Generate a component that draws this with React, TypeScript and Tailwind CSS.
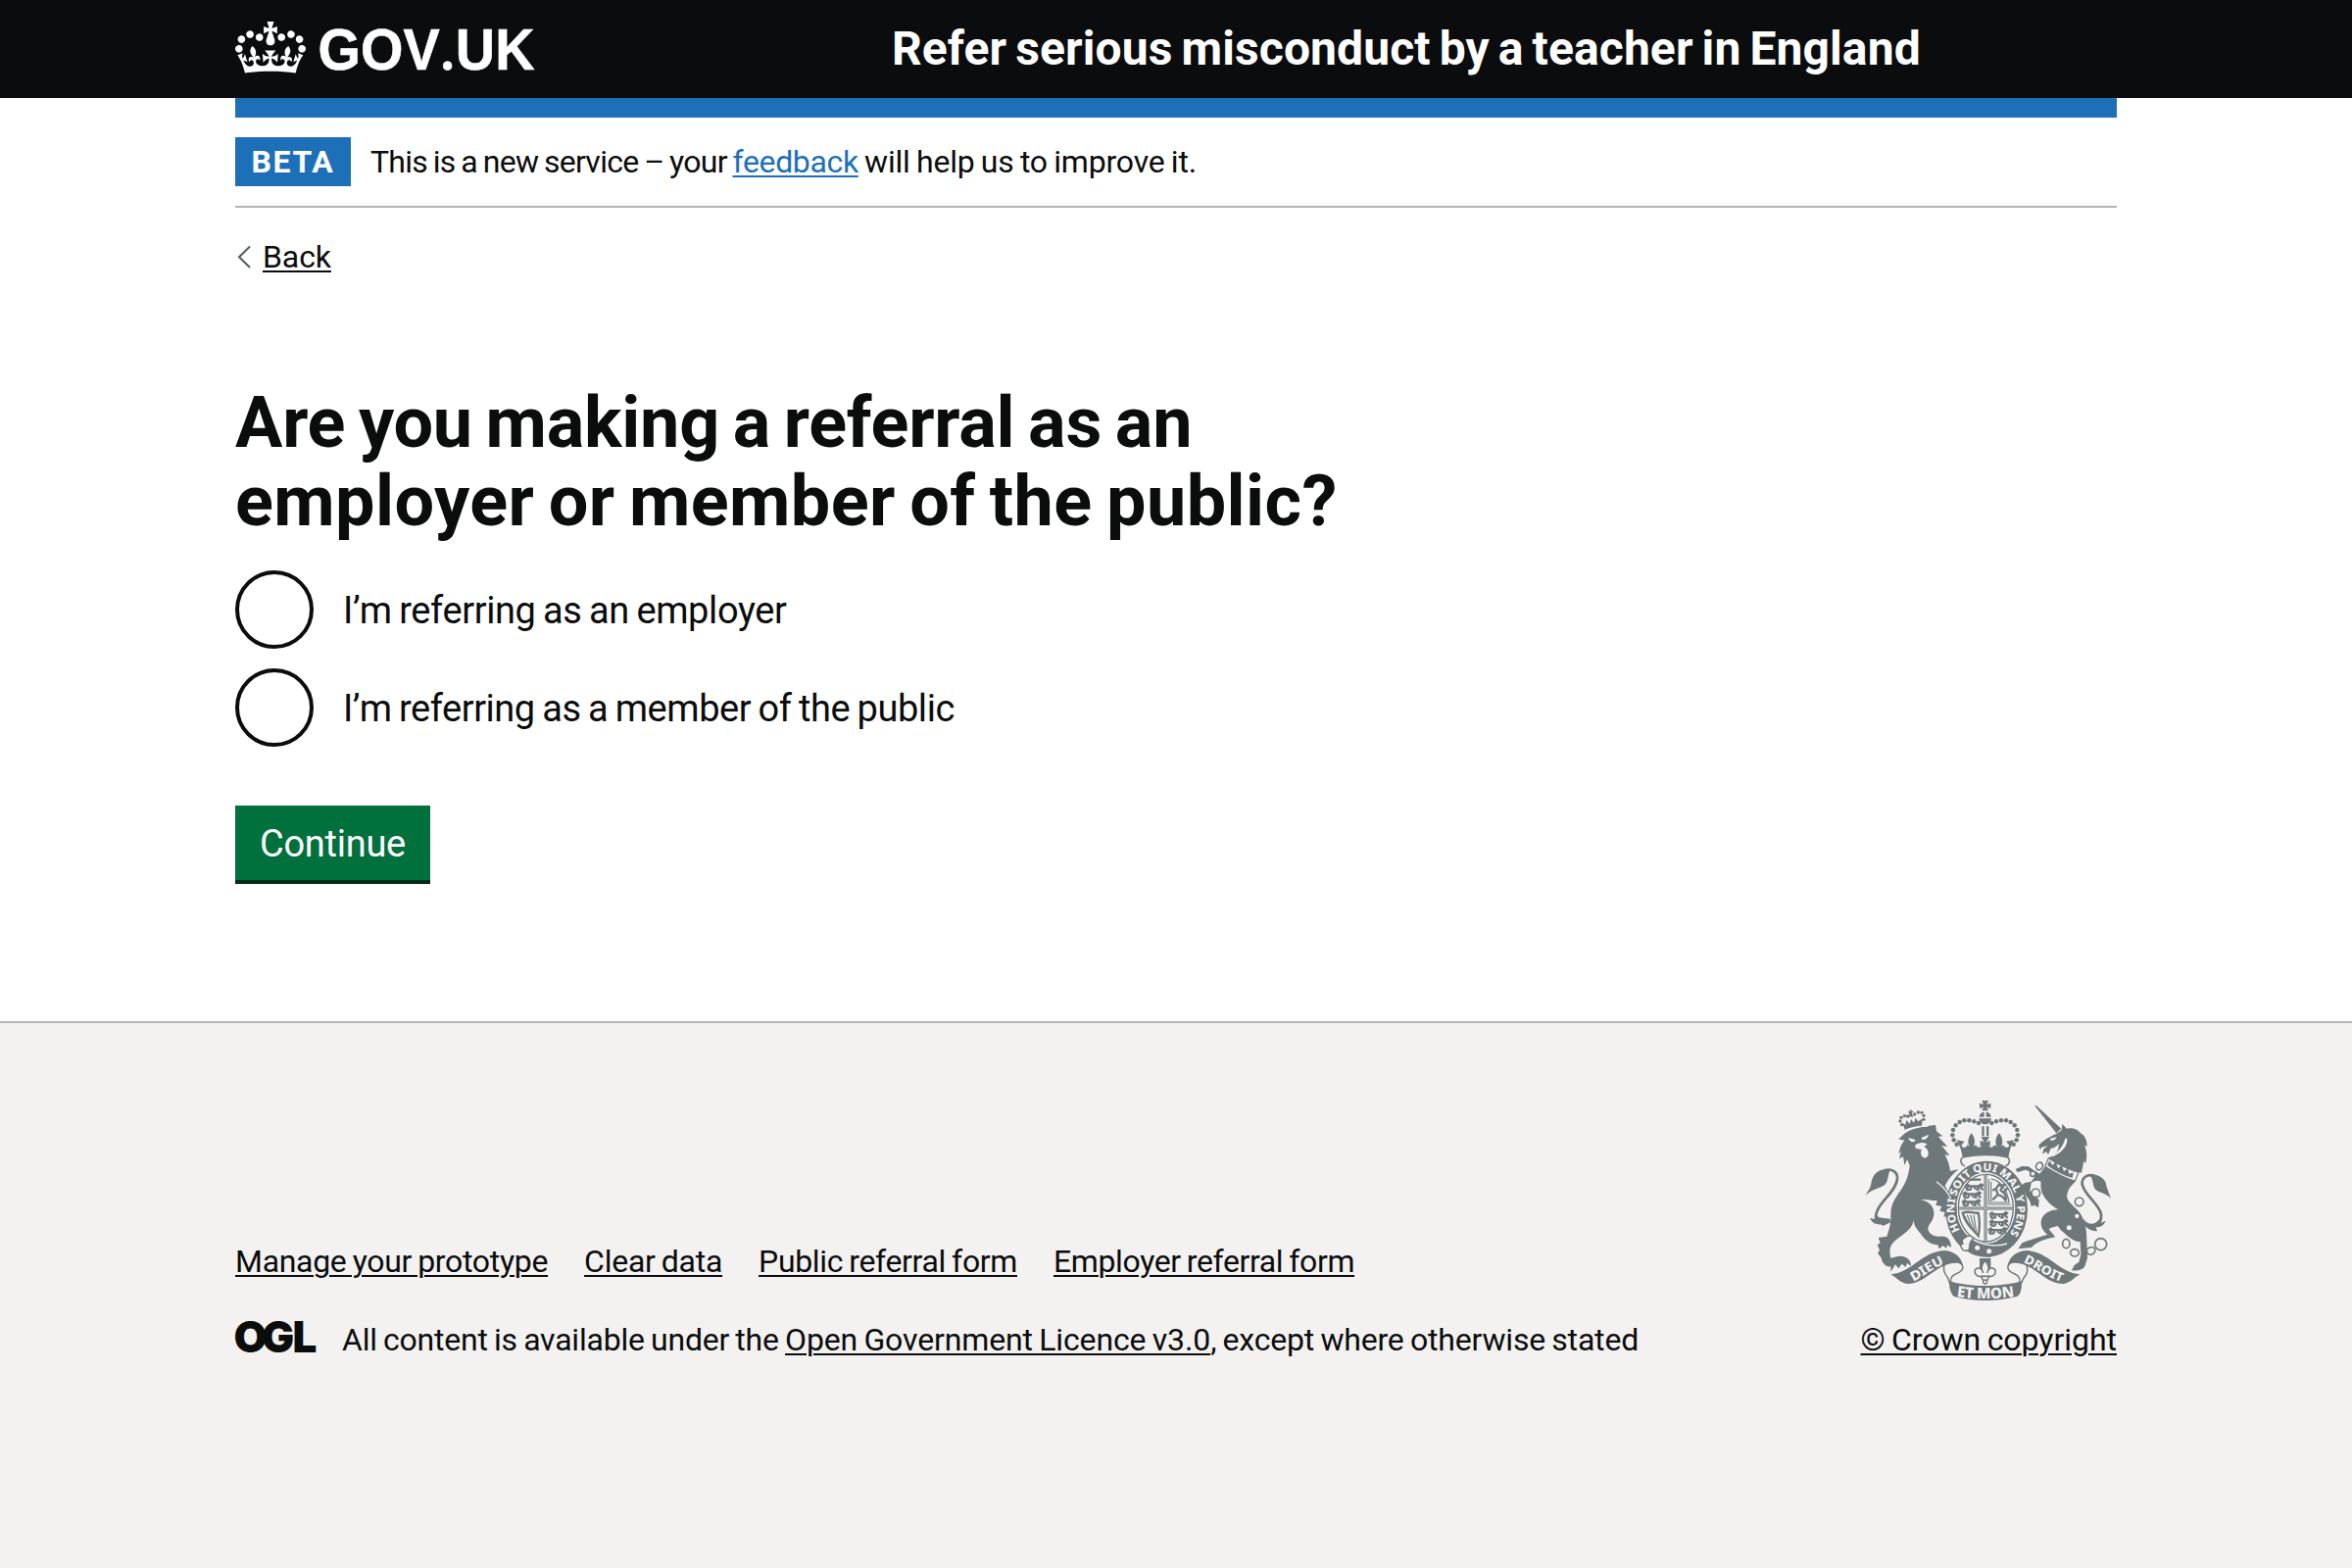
import React from "react";

const LINK = "underline decoration-2 underline-offset-[3px]";

function Crown() {
  return (
    <svg viewBox="0 0 132 97" className="relative -top-[2px] h-[53px] w-[72px] shrink-0" fill="currentColor" aria-hidden="true">
      <path
        fillRule="evenodd"
        d="M25 30.2c3.5 1.5 7.7-.2 9.1-3.7 1.5-3.6-.2-7.8-3.9-9.2-3.6-1.4-7.6.3-9.1 3.9-1.4 3.5.3 7.5 3.9 9zM9 39.5c3.6 1.5 7.8-.2 9.2-3.7 1.5-3.6-.2-7.8-3.9-9.1-3.6-1.5-7.6.2-9.1 3.8-1.4 3.5.3 7.5 3.8 9zM4.4 57.2c3.5 1.5 7.7-.2 9.1-3.8 1.5-3.6-.2-7.7-3.9-9.1-3.5-1.5-7.6.3-9.1 3.8-1.4 3.5.3 7.6 3.9 9.1zm38.3-21.4c3.5 1.5 7.7-.2 9.1-3.8 1.5-3.6-.2-7.7-3.9-9.1-3.6-1.5-7.6.3-9.1 3.8-1.3 3.6.4 7.7 3.9 9.1zm64.4-5.6c-3.6 1.5-7.8-.2-9.1-3.7-1.5-3.6.2-7.8 3.8-9.2 3.6-1.4 7.7.3 9.2 3.9 1.3 3.5-.4 7.5-3.9 9zm15.9 9.3c-3.6 1.5-7.7-.2-9.1-3.7-1.5-3.6.2-7.8 3.7-9.1 3.6-1.5 7.7.2 9.2 3.8 1.5 3.5-.3 7.5-3.8 9zm4.7 17.7c-3.6 1.5-7.8-.2-9.2-3.8-1.5-3.6.2-7.7 3.9-9.1 3.6-1.5 7.7.3 9.2 3.8 1.3 3.5-.4 7.6-3.9 9.1zM89.3 35.8c-3.6 1.5-7.8-.2-9.2-3.8-1.4-3.6.2-7.7 3.9-9.1 3.6-1.5 7.7.3 9.2 3.8 1.4 3.6-.3 7.7-3.9 9.1zM69.7 17.7l8.9 4.7V9.3l-8.9 2.8c-.2-.3-.5-.6-.9-.9L72.4 0H59.6l3.5 11.2c-.3.3-.6.5-.9.9l-8.8-2.8v13.1l8.8-4.7c.3.3.6.7.9.9l-5 15.4v.1c-.2.8-.4 1.6-.4 2.4 0 4.1 3.1 7.5 7 8.1h.2c.3 0 .7.1 1 .1.4 0 .7 0 1-.1h.2c4-.6 7.1-4.1 7.1-8.1 0-.8-.1-1.7-.4-2.4V34l-5.1-15.4c.4-.2.7-.6 1-.9zM66 92.8c16.9 0 32.8 1.1 47.1 3.2 4-16.9 8.9-26.7 14-33.5l-9.6-3.4c1 4.9 1.1 7.2 0 10.2-1.5-1.4-3-4.3-4.2-8.7L108.6 76c2.8-2 5-3.2 7.5-3.3-4.4 9.4-10 11.9-13.6 11.2-4.3-.8-6.3-4.6-5.6-7.9 1-4.7 5.7-5.9 8-.5 4.3-8.7-3-11.4-7.6-8.8 7.1-7.2 7.9-13.5 2.1-21.1-8 6.1-8.1 12.3-4.5 20.8-4.7-5.4-12.1-2.5-9.5 6.2 3.4-5.2 7.9-2 7.2 3.1-.6 4.3-6.4 7.8-13.5 7.2-10.3-.9-10.9-8-11.2-13.8 2.5-.5 7.1 1.8 11 7.3L80.2 60c-4.1 4.4-8 5.3-12.3 5.4 1.4-4.4 8-11.6 8-11.6H55.5s6.4 7.2 7.9 11.6c-4.2-.1-8-1-12.3-5.4l1.4 16.4c3.9-5.5 8.5-7.7 10.9-7.3-.3 5.8-.9 12.8-11.1 13.8-7.2.6-12.9-2.9-13.5-7.2-.7-5 3.8-8.3 7.1-3.1 2.7-8.7-4.6-11.6-9.4-6.2 3.7-8.5 3.6-14.7-4.6-20.8-5.8 7.6-5 13.9 2.2 21.1-4.7-2.6-11.9.1-7.7 8.8 2.3-5.5 7.1-4.2 8.1.5.7 3.3-1.3 7.1-5.7 7.9-3.5.7-9-1.8-13.5-11.2 2.5.1 4.7 1.3 7.5 3.3l-4.7-15.4c-1.2 4.4-2.7 7.2-4.3 8.7-1.1-3-.9-5.3 0-10.2l-9.5 3.4c5 6.9 9.9 16.7 14 33.5 14.8-2.1 30.8-3.2 47.7-3.2z"
      />
    </svg>
  );
}

const INK = "#6e777a";
const PAPER = "#f3f2f1";

const pearls: [number, number][] = [
  [320, 176], [311, 163], [307, 148], [309, 132], [317, 118], [329, 108], [343, 103], [358, 103], [373, 106], [387, 111],
];

const lionCrownPearls: [number, number][] = [
  [152, 116], [147, 105], [150, 94], [160, 89], [170, 90], [191, 84], [202, 78], [213, 79], [219, 88], [219, 100],
];

function Passant({ x, y }: { x: number; y: number }) {
  return (
    <g transform={`translate(${x} ${y})`} fill="none" stroke={INK} strokeWidth="6.5" strokeLinecap="round" strokeLinejoin="round">
      <path d="M4 8l6-5 6 5h28l8-6 5 3-5 4M14 9l-8 6 4 5M22 10l-3 9h-6M40 10l4 8h-7M48 10l8 8M30 8l2 6" />
    </g>
  );
}

function RoyalArms() {
  return (
    <svg viewBox="42 42 750 612" className="h-[204px] w-[250px]" aria-hidden="true">
      {/* Imperial crown */}
      <g fill={INK}>
        <path d="M397 42h20l-5 12 12-4v16l-12-4 5 11h-20l5-11-12 4V50l12 4zM389 92c1-9 6-14 15-15v15zM410 77c9 1 14 6 15 15h-15zM388 97h38c-2 12-10 18-19 18s-17-6-19-18z" />
        {pearls.map(([x, y]) => (
          <g key={`${x}-${y}`}>
            <circle cx={x} cy={y} r="6.8" />
            <circle cx={814 - x} cy={y} r="6.8" />
          </g>
        ))}
        <path d="M397 121h7v30h-7zM411 121h7v30h-7z" />
        <path d="M320 163L344 167L334 179C338 188 350 188 352 178L358 182C352 168 356 152 365 142C374 152 378 168 372 182L379 178C382 188 394 188 399 178L392 184V164L404 170L395 153H420L410 170L422 164V184L415 178C420 188 432 188 435 178L442 182C436 168 440 152 450 142C459 152 463 168 457 182L463 178C466 188 478 188 481 179L471 167L495 163C486 180 480 200 478 218Q407 202 338 218C336 200 330 180 320 163Z" />
      </g>
      <path d="M345 242c-14-4-17-22-4-27 44-9 88-9 132 0 13 5 10 23-4 27" fill={PAPER} stroke={INK} strokeWidth="4.5" />

      {/* Garter */}
      <ellipse cx="411" cy="374" rx="126" ry="147" fill={INK} />
      <ellipse cx="409" cy="371" rx="90" ry="109" fill={PAPER} />

      {/* Quartered shield */}
      <g fill="none" stroke={INK}>
        <ellipse cx="409" cy="371" rx="84" ry="103" strokeWidth="4" />
        <path d="M408 268v208M325 372h168" strokeWidth="9" />
        <path d="M408 268v208M325 372h168" stroke={PAPER} strokeWidth="2" />
        <path d="M418 282v78h68M425 290v64h56M425 282c30 4 50 34 55 72" strokeWidth="3.5" />
        <path d="M432 344l14-14 14 6 10 12M446 330l-6-18 10-14 10 10-6 8 14 12 4 14M440 312l-8 4M458 302l10-2M464 322l10-10" strokeWidth="7" strokeLinecap="round" strokeLinejoin="round" />
        <path d="M338 386c20-8 32 2 48 0 6 26 4 48 0 70-14-18-38-32-48-70z" strokeWidth="7" />
        <path d="M352 392l14 40M362 392l12 48M372 392l8 54M345 396l10 24" strokeWidth="3.5" />
      </g>
      <Passant x={343} y={296} />
      <Passant x={336} y={320} />
      <Passant x={334} y={344} />
      <Passant x={418} y={382} />
      <Passant x={418} y={406} />
      <Passant x={414} y={430} />
      <path d="M356 284h38" stroke={INK} strokeWidth="7" />

      {/* Strap and buckle */}
      <path d="M364 462c42 24 84 24 122 6l-18 30-48 24-58-20z" fill={INK} />
      <path d="M368 466c34 20 72 24 106 14" fill="none" stroke={PAPER} strokeWidth="4" />
      <circle cx="383" cy="493" r="7.5" fill={PAPER} />
      <circle cx="419" cy="503" r="7.5" fill={PAPER} />
      <path d="M345 462c10-10 22-4 28 2-10 4-14 12-14 30-4 12-22 10-24-2-6-6-2-12 4-12-6-8 0-16 6-18z" fill={PAPER} stroke={INK} strokeWidth="4.5" />

      {/* Lion */}
      <g fill={INK}>
        {lionCrownPearls.map(([x, y]) => (
          <circle key={`${x}-${y}`} cx={x} cy={y} r="5" />
        ))}
        <path d="M171 74l6 2-1-5 6-1-1 5 7-1-5 7 4 12-10-2-4 4 2-12zM154 110l9 6 3-14 10 11 4-14 9 11 5-15 8 11 13-9-2 25c-18 0-36 4-51 12z" />
        <path d="M142 160L160 143C184 126 220 120 255 117L258 136L277 151L263 152L292 183L274 180L298 210L284 208C292 224 298 240 300 258L326 252C306 268 292 284 284 304L306 340C320 358 322 372 318 394L309 390L305 400L297 394L280 398L284 384L268 380L274 366L256 362L260 348C244 350 226 342 210 346C240 352 252 370 250 392C248 412 232 420 232 436C236 452 252 460 270 458C290 456 302 466 303 492L292 484L288 494L278 486L266 496L262 484C238 484 222 468 208 448C196 432 188 424 189 408C180 444 150 452 128 474C112 490 114 506 118 524L136 520C158 514 180 526 180 548L168 540L164 552L152 542L142 556L132 544L118 566L118 550C100 552 92 538 88 522L78 510L84 500L77 484L86 478L80 462L106 458C114 434 118 420 118 396C116 356 136 336 154 308C168 288 174 262 176 240L168 222L160 240L156 214L144 220L150 196L142 206C144 190 152 172 160 164Z" />
        <path d="M98 253C78 256 62 268 58 296C56 312 46 318 42 332C56 314 84 312 100 300C112 288 108 270 116 256Z" />
        <path d="M98 256c24-8 42 6 40 26-4 44-68 76-66 120 0 18 16 20 44 8" fill="none" stroke={INK} strokeWidth="8" />
        <path d="M70 386l2 20-18-4c8 16 18 20 34 18l6 6 20-10 2-12-34-4z" />
      </g>
      <g fill={PAPER}>
        <path d="M160 132C188 120 216 118 232 118L232 122C206 122 184 127 162 136ZM172 156L194 162L190 168C182 170 174 166 172 156ZM212 156L234 146C232 156 224 162 214 162ZM192 180C204 168 220 170 230 176L220 182L230 192C236 204 234 216 222 218C210 214 208 204 212 192L194 188Z" />
      </g>
      <path d="M258 290c16 12 34 30 44 52" fill="none" stroke={PAPER} strokeWidth="4" />

      {/* Garter motto */}
      <path id="garter-line" d="M330 440A96 117 0 1 1 476 458" fill="none" />
      <text fill={PAPER} fontFamily="'Noto Sans', sans-serif" fontWeight="800" fontSize="33">
        <textPath href="#garter-line" textLength="505" lengthAdjust="spacingAndGlyphs">
          HONI SOIT QUI MAL Y PENSE
        </textPath>
      </text>

      {/* Unicorn */}
      <g fill={INK}>
        <path d="M558 57l6 1 76 70-15 14z" />
        <path d="M571 180c10-14 28-24 52-35l18-12 2-19 14 14c22-4 34 4 42 14 16 8 20 26 20 40l-8-4c8 20 8 36 4 56l-6-6-7 35c-32-8-68-22-102-45 20-8 34-22 32-44-8 10-14 14-24 14l-8 20-6-10-12 8 4-14-12-2z" />
        <path d="M591 244C621 262 652 280 683 290C665 308 656 320 658 340C664 360 692 372 704 398C714 420 718 440 718 470L720 524L712 550C704 562 690 564 672 562L680 546L694 536L700 514L698 474C680 474 664 462 648 446C636 438 634 432 630 426C616 430 606 430 602 436L622 460C590 466 566 474 548 492L508 496L520 478L540 470L598 452C584 442 578 430 578 414C580 390 604 376 632 376C610 366 594 348 584 330C578 320 576 304 578 290C566 284 556 288 548 294L544 318L556 334L572 346L570 370L558 362L548 366L544 350L532 332L524 312L514 318L512 306L528 294L548 290L560 274C548 264 540 256 530 254L506 262L500 252L520 243L540 244L556 256L574 266Z" />
        <path d="M738 268C764 272 778 288 778 304L792 342C776 324 758 326 746 316C734 302 740 284 728 272Z" />
        <path d="M740 272c-20-6-38 6-36 26 6 34 52 60 58 92 2 20-8 32-26 36" fill="none" stroke={INK} strokeWidth="8" />
        <path d="M708 404c8 12 20 18 34 14l24-18-4 16 14-6c-6 16-18 20-30 20l4 12c-18 0-32-8-42-22z" />
      </g>
      <path d="M601 218c28 20 60 34 92 44l-11 27c-32-10-62-26-92-45z" fill={PAPER} stroke={INK} strokeWidth="3.5" />
      <path d="M597 240L604 226L613 240L624 230L630 250L642 240L648 259L660 249L664 267L677 262L674 279C646 271 620 258 597 240Z" fill={INK} />
      <path d="M606 158l20-4c-4 8-10 12-18 10zM577 186l22-6-18 14zM658 158c2 24-16 42-44 56l-4-4c22-12 36-28 42-52z" fill={PAPER} />
      <g fill={PAPER} stroke={INK} strokeWidth="5">
        <ellipse cx="573" cy="243" rx="10" ry="12" transform="rotate(25 573 243)" />
        <circle cx="553" cy="266" r="8" />
        <circle cx="562" cy="325" r="13" />
        <circle cx="695" cy="352" r="13" />
        <circle cx="688" cy="396" r="9" />
        <circle cx="664" cy="431" r="10" />
        <ellipse cx="655" cy="480" rx="11" ry="14" />
        <ellipse cx="681" cy="508" rx="13" ry="11" />
        <ellipse cx="731" cy="502" rx="13" ry="11" transform="rotate(-25 731 502)" />
        <circle cx="761" cy="482" r="18" />
      </g>

      {/* Plant badge */}
      <path d="M390 525h34v40h-34z" fill={INK} />
      <path d="M407 532c14 16 12 26 6 38 4-18 22-20 26-6 0 14-12 18-20 16-2 10-6 14-12 18-6-4-10-8-12-18-8 2-20-2-20-16 4-14 22-12 26 6-6-12-8-22 6-38z" fill={PAPER} stroke={INK} strokeWidth="4.5" />
      <path d="M393 580h28" stroke={INK} strokeWidth="5" />
      <circle cx="407" cy="597" r="6" fill={PAPER} stroke={INK} strokeWidth="4" />

      {/* Motto ribbon */}
      <g fill={INK}>
        <path d="M118 574c62-4 92-66 160-73 34 0 58 20 61 50-8-14-22-14-36-10-50 8-82 64-136 62-22-4-30-18-49-29z" />
        <path d="M697 574c-62-4-92-66-160-73-34 0-58 20-61 50 8-14 22-14 36-10 50 8 82 64 136 62 22-4 30-18 49-29z" />
        <path d="M296 594C360 614 458 614 520 594L518 616C516 630 512 638 504 642C444 658 370 658 312 642C302 634 298 620 296 594Z" />
      </g>
      <g fill="none" stroke={INK} strokeWidth="4.5">
        <path d="M304 512c-22 20-30 44-18 62 6 8 10 14 12 26M306 538c22-6 34 2 32 18-4 18-40 14-36 40" />
        <path d="M511 512c22 20 30 44 22 62-6 8-12 14-14 26M509 538c-22-6-34 2-32 18 4 18 38 14 36 40" />
      </g>
      <g fill={PAPER} fontFamily="'Noto Sans', sans-serif" fontWeight="800" textAnchor="middle">
        <path id="ribbon-left" d="M178 600C216 584 244 556 292 538" fill="none" />
        <path id="ribbon-right" d="M514 535C560 548 590 584 650 600" fill="none" />
        <path id="ribbon-mid" d="M312 641C370 651 440 651 504 641" fill="none" />
        <text fontSize="40">
          <textPath href="#ribbon-left" startOffset="50%" textLength="110" lengthAdjust="spacingAndGlyphs">DIEU</textPath>
        </text>
        <text fontSize="38">
          <textPath href="#ribbon-right" startOffset="50%" textLength="132" lengthAdjust="spacingAndGlyphs">DROIT</textPath>
        </text>
        <text fontSize="46">
          <textPath href="#ribbon-mid" startOffset="50%" textLength="178" lengthAdjust="spacingAndGlyphs">ET MON</textPath>
        </text>
      </g>
    </svg>
  );
}

const footerLinks = [
  { label: "Manage your prototype", spacing: "tracking-[-0.31px]" },
  { label: "Clear data", spacing: "tracking-[-0.26px]" },
  { label: "Public referral form", spacing: "tracking-[-0.34px]" },
  { label: "Employer referral form", spacing: "tracking-[-0.38px]" },
];

const options = [
  { label: "I’m referring as an employer", spacing: "tracking-[-0.4px]" },
  { label: "I’m referring as a member of the public", spacing: "tracking-[-0.46px]" },
];

export default function App() {
  return (
    <div className="flex min-h-[1600px] flex-col bg-white font-['Roboto',sans-serif] text-[32px] leading-[40px] text-[#0b0c0c] [word-spacing:-1.5px]">
      <header className="h-[100px] bg-[#0b0c0e] text-white">
        <div className="mx-auto flex h-full w-[1920px] items-center">
          <div className="flex w-[670px] items-center gap-[12px]">
            <Crown />
            <svg viewBox="0 0 240 60" className="h-[60px] w-[240px] overflow-visible" fill="currentColor">
              <text
                x="0.5"
                y="51"
                textLength="221"
                lengthAdjust="spacingAndGlyphs"
                fontFamily="'Liberation Sans', sans-serif"
                fontWeight="700"
                fontSize="60"
                stroke="currentColor"
                strokeWidth="0.6"
                wordSpacing="0"
              >
                GOV<tspan fontFamily="Roboto, sans-serif">.</tspan>UK
              </text>
            </svg>
          </div>
          <span className="whitespace-nowrap text-[48px] font-bold leading-[60px] tracking-[0.1px] [word-spacing:-3px]">
            Refer serious misconduct by a teacher in England
          </span>
        </div>
      </header>

      <div className="mx-auto w-[1920px]">
        <div className="h-5 bg-[#1d70b8]" />
        <div className="flex items-center border-b-2 border-[#b1b4b6] py-5">
          <strong className="flex h-[50px] w-[118px] items-center justify-center bg-[#1d70b8] font-bold tracking-[1.6px] text-white">
            BETA
          </strong>
          <p className="ml-5 whitespace-pre">
            <span className="tracking-[-0.73px]">This is a new service – your </span>
            <a className={`${LINK} tracking-[-0.36px] text-[#1d70b8]`}>feedback</a>
            <span className="tracking-[-0.18px]"> will help us to improve it.</span>
          </p>
        </div>
        <div className="mt-[30px] flex items-center">
          <svg viewBox="0 0 28 40" className="h-[40px] w-[28px]" fill="none" stroke="#505a5f" strokeWidth="2">
            <path d="M15 9.5L4 20.3L15 31" />
          </svg>
          <a className={`${LINK} tracking-[-0.1px]`}>Back</a>
        </div>

        <main className="pt-[110px]">
          <h1 className="text-[72px] font-bold leading-[80px] [word-spacing:-4px]">
            <span className="block tracking-[-0.23px]">Are you making a referral as an</span>
            <span className="block tracking-[0.43px]">employer or member of the public?</span>
          </h1>
          <div className="mt-[30px] flex flex-col gap-5 text-[38px]">
            {options.map((o) => (
              <label key={o.label} className="flex items-center gap-[30px]">
                <span className="size-20 rounded-full border-4 border-[#0b0c0c]" />
                <span className={`pt-0.5 ${o.spacing}`}>{o.label}</span>
              </label>
            ))}
          </div>
          <button className="mt-[60px] flex h-[80px] w-[199px] items-center justify-center border-b-4 border-[#002d18] bg-[#00703c] pt-0.5 text-[38px] tracking-[-0.27px] text-white">
            Continue
          </button>
        </main>
      </div>

      <footer className="mt-[140px] grow border-t-2 border-[#b1b4b6] bg-[#f3f2f1] pt-[79px]">
        <div className="mx-auto flex w-[1920px] items-end justify-between">
          <div>
            <ul className="flex gap-[37px]">
              {footerLinks.map((l) => (
                <li key={l.label}>
                  <a className={`${LINK} ${l.spacing}`}>{l.label}</a>
                </li>
              ))}
            </ul>
            <div className="mt-[40px] flex items-center">
              <svg viewBox="0 0 82 40" className="h-[40px] w-[82px] overflow-visible" fill="currentColor">
                <text y="33" x="-1.5 27 58.5" fontFamily="Inter, sans-serif" fontWeight="900" fontSize="44">OGL</text>
              </svg>
              <p className="ml-[27px] whitespace-pre">
                <span className="tracking-[-0.21px]">All content is available under the </span>
                <a className={`${LINK} tracking-[-0.13px]`}>Open Government Licence v3.0</a>
                <span className="tracking-[-0.18px]">, except where otherwise stated</span>
              </p>
            </div>
          </div>
          <div className="flex flex-col items-center gap-[20px]">
            <RoyalArms />
            <a className={`${LINK} tracking-[-0.03px]`}>© Crown copyright</a>
          </div>
        </div>
      </footer>
    </div>
  );
}
